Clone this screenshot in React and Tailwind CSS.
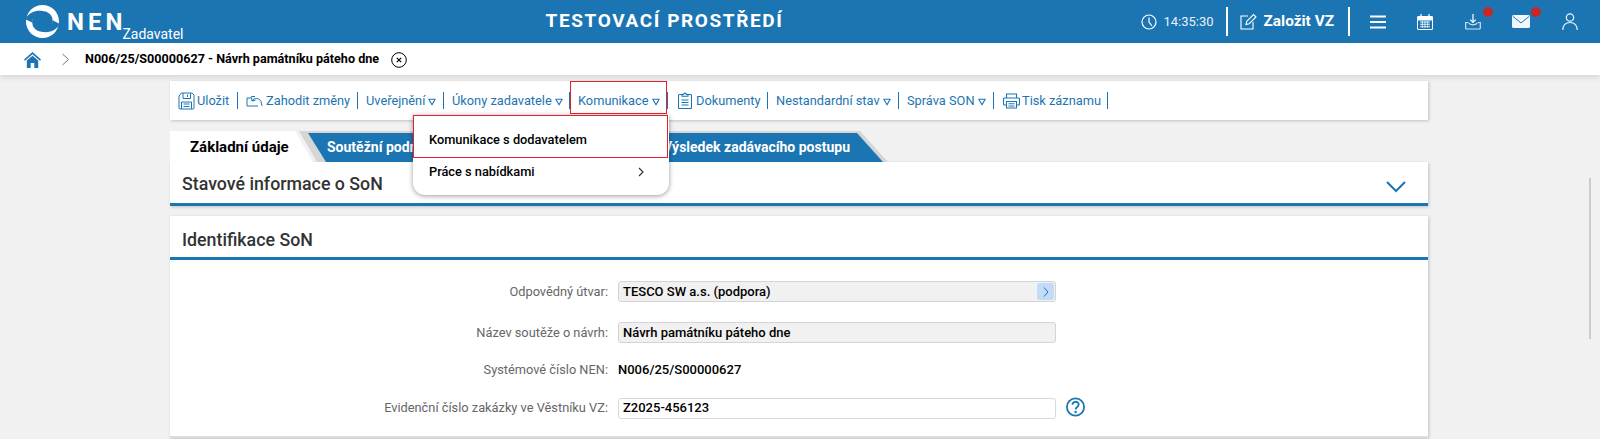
import React from 'react';

const Caret = () => (
  <svg width="8" height="8" viewBox="0 0 8 8" className="ml-[3px] mt-[2px] shrink-0">
    <path d="M0.8 1.2 H7.2 L4 6.8 Z" fill="none" stroke="currentColor" strokeWidth="1.1" strokeLinejoin="round" />
  </svg>
);

const Sep = () => <span className="h-[17px] w-px shrink-0 bg-[#1c75b3]" />;

// sirky polozek jsou dane pozicemi oddelovacu v toolbaru
const ToolItem = ({ icon, label, caret, className }) => (
  <div className={`flex items-center whitespace-nowrap ${className}`}>
    {icon}
    <span>{label}</span>
    {caret && <Caret />}
  </div>
);

const SaveIcon = () => (
  <svg width="17" height="18" viewBox="0 0 17 18" fill="none" stroke="currentColor" strokeWidth="1" className="mr-[2px] shrink-0">
    <path d="M3.5 1 H14 L16 3 V16 a1 1 0 0 1 -1 1 H2 a1 1 0 0 1 -1 -1 V4 Z" />
    <path d="M5 1 V6.5 H12.5 V1 M9.5 2.5 V5" />
    <path d="M3.5 17 V10 H13.5 V17 M5.5 12 H11.5 M5.5 14.5 H11.5" />
  </svg>
);

const UndoIcon = () => (
  <svg width="17" height="13" viewBox="0 0 17 13" fill="none" stroke="currentColor" strokeWidth="1" className="mr-[3px] mt-[2px] shrink-0">
    <path d="M1 3 H4.5 L5.5 1.5 H9 M1 3 V11 H12" />
    <path d="M6 6 C8 2.5 13 2.5 15 6.5 L16 11 M6 6 L5.5 2.5 M6 6 L9.5 5.2" />
  </svg>
);

const DocIcon = () => (
  <svg width="14" height="17" viewBox="0 0 14 17" fill="none" stroke="currentColor" strokeWidth="1.1" className="mr-[4px] shrink-0">
    <path d="M4 2.5 H1.5 a1 1 0 0 0 -1 1 V15.5 a1 1 0 0 0 1 1 H12.5 a1 1 0 0 0 1 -1 V3.5 a1 1 0 0 0 -1 -1 H10" />
    <path d="M4 4.2 V2.5 H5.6 a1.4 1.4 0 0 1 2.8 0 H10 V4.2 Z" />
    <path d="M3.5 8 H10.5 M3.5 10.5 H10.5 M3.5 13 H10.5" />
  </svg>
);

const PrintIcon = () => (
  <svg width="17" height="16" viewBox="0 0 17 16" fill="none" stroke="currentColor" strokeWidth="1.1" className="mr-[2px] shrink-0">
    <path d="M3.5 5 V1 H13.5 V5" />
    <path d="M3.5 12 H1.5 a1 1 0 0 1 -1 -1 V6 a1 1 0 0 1 1 -1 H15.5 a1 1 0 0 1 1 1 V11 a1 1 0 0 1 -1 1 H13.5" />
    <path d="M3.5 8.5 H13.5 V15 H3.5 Z M5.5 10.8 H11.5 M5.5 13 H11.5" />
  </svg>
);

// prstenec se dvema srpky, mezery vlevo nahore a vpravo dole
const Logo = () => (
  <svg width="33" height="33" viewBox="0 0 33 33" className="shrink-0">
    <circle cx="16.5" cy="16.5" r="16.5" fill="white" />
    <circle cx="16.5" cy="16.5" r="10.5" fill="#1c75b3" />
    <path d="M-1 14 C2.5 8 10 4.5 17 6.2 L13 8 C9 9.5 6.5 13 6 17.5 Z" fill="#1c75b3" />
    <path d="M34 19 C30.5 25 23 28.5 16 26.8 L20 25 C24 23.5 26.5 20 27 15.5 Z" fill="#1c75b3" />
  </svg>
);

const Row = ({ label, children, className }) => (
  <div className={`flex items-center ${className}`}>
    <div className="w-[448px] pr-[10px] text-right text-[12.8px] text-[#666666]">{label}</div>
    {children}
  </div>
);

export default function App() {
  return (
    <div className="relative h-[439px] w-[1600px] overflow-hidden bg-[#f1f1f1] font-['Roboto',sans-serif] text-black">
      {/* Horni lista */}
      <header className="flex h-[43px] items-center bg-[#1c75b3] text-white">
        <div className="ml-[26px]"><Logo /></div>
        <span className="ml-[8px] text-[24px] font-bold leading-none tracking-[4px]">NEN</span>
        <span className="ml-[-4px] mt-[25px] text-[14px] leading-none">Zadavatel</span>
        <div className="ml-[362px] w-[238px] whitespace-nowrap text-center text-[19px] font-bold tracking-[1.6px]">TESTOVACÍ PROSTŘEDÍ</div>

        <svg width="16" height="16" viewBox="0 0 16 16" fill="none" stroke="white" strokeWidth="1.2" className="ml-[357px]">
          <circle cx="8" cy="8" r="7" />
          <path d="M8 3.5 V8 L11 12" />
        </svg>
        <span className="ml-[7px] w-[52px] text-[13px] text-[#e8f1f8]">14:35:30</span>
        <span className="ml-[10px] h-[29px] w-[2px] bg-white" />
        <svg width="17" height="17" viewBox="0 0 17 17" fill="none" stroke="white" strokeWidth="1.1" className="ml-[12px]">
          <path d="M8 3 H1 V16 H13 V9" />
          <path d="M6 11.5 L6.8 8.3 L13.5 1.5 L16 4 L9.2 10.7 Z" />
        </svg>
        <span className="ml-[7px] w-[73px] whitespace-nowrap text-[15.4px] font-bold">Založit VZ</span>
        <span className="ml-[11px] h-[29px] w-[2px] bg-white" />
        <svg width="16" height="14" viewBox="0 0 16 14" fill="none" stroke="white" strokeWidth="1.8" className="ml-[20px]">
          <path d="M0 1.5 H16 M0 7 H16 M0 12.5 H16" />
        </svg>
        <svg width="16" height="16" viewBox="0 0 16 16" fill="none" stroke="white" className="ml-[31px]">
          <rect x="0.5" y="2.5" width="15" height="13" rx="0.5" />
          <path d="M0.5 3 H15.5 V6 H0.5 Z" fill="white" strokeWidth="1" />
          <path d="M4 0 V3 M12 0 V3" strokeWidth="1.3" />
          <path d="M3 8 H13 M3 10.3 H13 M3 12.7 H13 M5.3 7 V14 M8 7 V14 M10.7 7 V14" strokeWidth="0.8" />
        </svg>
        <div className="relative ml-[32px] h-[16px] w-[16px]">
          <svg width="16" height="16" viewBox="0 0 16 16" fill="none" stroke="white" strokeWidth="1.2">
            <path d="M8 0 V8 M5.2 5.6 L8 8.4 L10.8 5.6" />
            <path d="M3 8.5 H0.7 V14 a1 1 0 0 0 1 1 H14.3 a1 1 0 0 0 1 -1 V8.5 H13 M3.5 8.8 C5 11.5 11 11.5 12.5 8.8" stroke="#cfe3f1" />
          </svg>
          <span className="absolute left-[18px] top-[-7px] h-[10px] w-[10px] rounded-full bg-[#c62828]" />
        </div>
        <div className="relative ml-[31px] h-[13px] w-[18px]">
          <svg width="18" height="13" viewBox="0 0 18 13" className="block">
            <rect x="0" y="0" width="18" height="13" rx="1.5" fill="#f2f7fb" />
            <path d="M1 1.5 L9 8 L17 1.5" fill="none" stroke="#1c75b3" strokeWidth="1" />
          </svg>
          <span className="absolute left-[19px] top-[-8px] h-[10px] w-[10px] rounded-full bg-[#c62828]" />
        </div>
        <svg width="16" height="17" viewBox="0 0 16 17" fill="none" stroke="#e8f1f8" strokeWidth="1.2" className="ml-[32px]">
          <circle cx="8" cy="4.5" r="3.7" />
          <path d="M0.8 17 C1 12 4 9.5 8 9.5 C12 9.5 15 12 15.2 17" />
        </svg>
      </header>

      {/* Drobeckova navigace */}
      <nav className="flex h-[32px] items-center bg-white pt-[1px] shadow-[0_2px_6px_rgba(0,0,0,0.12)]">
        <svg width="17" height="16" viewBox="0 0 17 16" className="ml-[24px] shrink-0">
          <path d="M8.5 0 L0 7.5 L1 8.7 L8.5 2.2 L16 8.7 L17 7.5 Z" fill="#1c75b3" />
          <path d="M2.8 8.6 L8.5 3.8 L14.2 8.6 V16 H10.3 V11 H6.7 V16 H2.8 Z" fill="#1c75b3" />
        </svg>
        <svg width="9" height="13" viewBox="0 0 9 13" fill="none" stroke="#777777" strokeWidth="1" className="ml-[20px] shrink-0">
          <path d="M1.5 1 L7.5 6.5 L1.5 12" />
        </svg>
        <span className="ml-[15px] whitespace-nowrap text-[12.6px] font-bold">N006/25/S00000627 - Návrh památníku páteho dne</span>
        <svg width="16" height="16" viewBox="0 0 16 16" fill="none" stroke="black" className="ml-[12px] shrink-0">
          <circle cx="8" cy="8" r="7.3" strokeWidth="1" />
          <path d="M5.8 5.8 L10.2 10.2 M10.2 5.8 L5.8 10.2" strokeWidth="1.2" />
        </svg>
      </nav>

      <main className="ml-[170px] w-[1258px] pt-[6px]">
        {/* Toolbar */}
        <div className="flex h-[39px] items-center bg-white pl-[8px] text-[12.8px] text-[#1c75b3] shadow-[1px_1px_3px_rgba(0,0,0,0.2)]">
          <ToolItem icon={<SaveIcon />} label="Uložit" className="w-[59px]" />
          <Sep />
          <ToolItem icon={<UndoIcon />} label="Zahodit změny" className="w-[119px] pl-[8px]" />
          <Sep />
          <ToolItem label="Uveřejnění" caret className="w-[85px] pl-[8px]" />
          <Sep />
          <ToolItem label="Úkony zadavatele" caret className="w-[125px] pl-[8px]" />
          <Sep />
          <ToolItem label="Komunikace" caret className="w-[97px] pl-[8px]" />
          <Sep />
          <ToolItem icon={<DocIcon />} label="Dokumenty" className="w-[99px] pl-[10px]" />
          <Sep />
          <ToolItem label="Nestandardní stav" caret className="w-[130px] pl-[8px]" />
          <Sep />
          <ToolItem label="Správa SON" caret className="w-[94px] pl-[8px]" />
          <Sep />
          <ToolItem icon={<PrintIcon />} label="Tisk záznamu" className="w-[113px] pl-[9px]" />
          <Sep />
        </div>

        {/* Zalozky */}
        <div className="mt-[11px] flex h-[31px] items-stretch">
          <div className="w-[143px] bg-white pl-[20px] pt-[1px] text-[15px] font-bold leading-[31px] [clip-path:polygon(0_0,125px_0,100%_100%,0_100%)]">
            Základní údaje
          </div>
          {/* sedy stin pod modrou zalozkou */}
          <div className="ml-[-14px] w-[589px] bg-[#d6d6d6] pl-[9px] pr-[5px] pt-[2px] [clip-path:polygon(0_0,calc(100%-28px)_0,100%_100%,18px_100%)]">
            <div className="flex h-[29px] items-center justify-between bg-[#1c75b3] pl-[19px] pr-[33px] text-[14px] font-bold text-white [clip-path:polygon(0_0,calc(100%-26px)_0,100%_100%,18px_100%)]">
              <span>Soutěžní podmínky</span>
              <span>Výsledek zadávacího postupu</span>
            </div>
          </div>
        </div>

        {/* Stavove informace */}
        <section className="flex h-[44px] items-center justify-between border-b-[3px] border-[#1c75b3] bg-white pl-[12px] pr-[22px] pt-[4px] shadow-[1px_1px_3px_rgba(0,0,0,0.2)]">
          <h2 className="text-[17.8px] font-medium text-[#333333]">Stavové informace o SoN</h2>
          <svg width="20" height="12" viewBox="0 0 20 12" fill="none" stroke="#1c75b3" strokeWidth="2" className="mt-[4px]">
            <path d="M1 1 L10 10 L19 1" />
          </svg>
        </section>

        {/* Identifikace */}
        <section className="mt-[10px] h-[222px] border-b-2 border-[#dddddd] bg-white shadow-[1px_1px_3px_rgba(0,0,0,0.2)]">
          <h2 className="flex h-[44px] items-center border-b-[3px] border-[#1c75b3] pl-[12px] pt-[8px] text-[17.8px] font-medium text-[#333333]">Identifikace SoN</h2>
          <Row label="Odpovědný útvar:" className="mt-[21px]">
            <div className="flex h-[21px] w-[438px] items-center justify-between rounded-[3px] border border-[#d4d4d4] bg-[#f1f1f1] pl-[4px] pr-[1px] text-[13px] font-medium">
              <span>TESCO SW a.s. (podpora)</span>
              <span className="flex h-[17px] w-[17px] items-center justify-center rounded-[3px] bg-[#c2dbf7]">
                <svg width="6" height="10" viewBox="0 0 6 10" fill="none" stroke="#2a68b0" strokeWidth="1">
                  <path d="M1 0.5 L5 5 L1 9.5" />
                </svg>
              </span>
            </div>
          </Row>
          <Row label="Název soutěže o návrh:" className="mt-[20px]">
            <div className="flex h-[21px] w-[438px] items-center rounded-[3px] border border-[#d4d4d4] bg-[#f1f1f1] pl-[4px] text-[13px] font-medium">
              Návrh památníku páteho dne
            </div>
          </Row>
          <Row label="Systémové číslo NEN:" className="mt-[17px]">
            <span className="text-[13px] font-medium">N006/25/S00000627</span>
          </Row>
          <Row label="Evidenční číslo zakázky ve Věstníku VZ:" className="mt-[18px]">
            <div className="flex h-[21px] w-[438px] items-center rounded-[3px] border border-[#d9d9d9] bg-white pl-[4px] text-[13px] font-medium">
              Z2025-456123
            </div>
            <svg width="19" height="20" viewBox="0 0 19 20" fill="none" className="ml-[10px] mt-[-2px]">
              <circle cx="9.5" cy="10" r="8.6" stroke="#1c75b3" strokeWidth="1.8" />
              <path d="M6.5 7.8 C6.5 3.8 12.7 3.8 12.7 7.6 C12.7 10 9.6 10 9.6 12.6" stroke="#1c75b3" strokeWidth="1.8" />
              <circle cx="9.6" cy="15" r="1.2" fill="#1c75b3" />
            </svg>
          </Row>
        </section>
      </main>

      {/* Rozbalene menu */}
      <div className="absolute left-[413px] top-[115px] w-[256px] rounded-b-[12px] bg-white pb-[9px] text-[12.8px] font-medium shadow-[0_1px_5px_rgba(0,0,0,0.4)]">
        <div className="flex h-[43px] items-center px-[16px] pt-[7px]">Komunikace s dodavatelem</div>
        <div className="flex h-[28px] items-center justify-between pl-[16px] pr-[25px]">
          <span>Práce s nabídkami</span>
          <svg width="6" height="10" viewBox="0 0 6 10" fill="none" stroke="#333333" strokeWidth="1.2">
            <path d="M1 1 L5 5 L1 9" />
          </svg>
        </div>
      </div>

      {/* Cervene zvyrazneni */}
      <div className="absolute left-[570px] top-[81px] h-[33px] w-[97px] border border-[#e0202c]" />
      <div className="absolute left-[413px] top-[115px] h-[43px] w-[255px] border border-[#e0202c]" />

      {/* Scrollbar */}
      <div className="absolute left-[1589px] top-[178px] h-[161px] w-[2px] bg-[#cccccc]" />
    </div>
  );
}
